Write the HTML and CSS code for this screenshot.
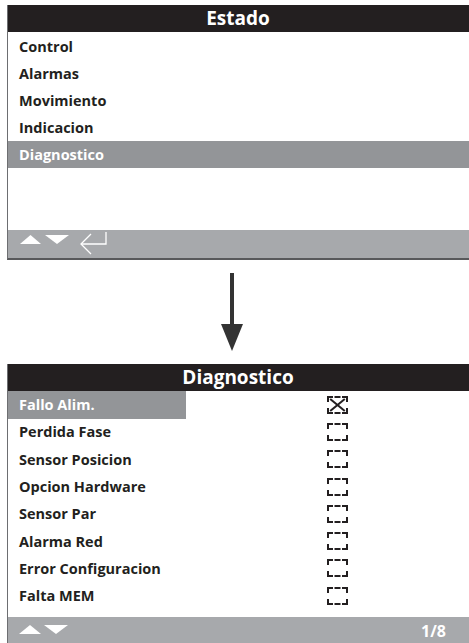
FILE: index.html
```html
<!DOCTYPE html>
<html lang="es">
<head>
  <meta charset="UTF-8">
  <title>Estado / Diagnostico</title>
  <link rel="stylesheet" href="styles.css">
</head>
<body>
  <div class="screen screen-menu">
    <div class="title">Estado</div>
    <div class="list">
      <div class="row">Control</div>
      <div class="row">Alarmas</div>
      <div class="row">Movimiento</div>
      <div class="row">Indicacion</div>
      <div class="row selected">Diagnostico</div>
    </div>
    <div class="footer">
      <svg class="nav" width="110" height="24" viewBox="0 0 110 24">
        <polygon points="12,12 22.5,3 33,12" fill="#fff"/>
        <polygon points="37,3 61,3 49,12" fill="#fff"/>
        <path d="M98 0 V12 H73" fill="none" stroke="#fff" stroke-width="1.3"/>
        <path d="M83 2 L73 12 L83 22" fill="none" stroke="#fff" stroke-width="1.3"/>
      </svg>
    </div>
  </div>

  <div class="flow-arrow">
    <svg width="24" height="80" viewBox="0 0 24 80">
      <rect x="10" y="0" width="4" height="56" fill="#333"/>
      <polygon points="1,51 23,51 12,78" fill="#333"/>
    </svg>
  </div>

  <div class="screen screen-list">
    <div class="title">Diagnostico</div>
    <div class="list">
      <div class="row"><span class="label selected">Fallo Alim.</span><span class="check checked"></span></div>
      <div class="row"><span class="label">Perdida Fase</span><span class="check"></span></div>
      <div class="row"><span class="label">Sensor Posicion</span><span class="check"></span></div>
      <div class="row"><span class="label">Opcion Hardware</span><span class="check"></span></div>
      <div class="row"><span class="label">Sensor Par</span><span class="check"></span></div>
      <div class="row"><span class="label">Alarma Red</span><span class="check"></span></div>
      <div class="row"><span class="label">Error Configuracion</span><span class="check"></span></div>
      <div class="row"><span class="label">Falta MEM</span><span class="check"></span></div>
    </div>
    <div class="footer">
      <svg class="nav" width="70" height="24" viewBox="0 0 70 24">
        <polygon points="11,15 22,6 33,15" fill="#fff"/>
        <polygon points="36,6 60,6 48,15" fill="#fff"/>
      </svg>
      <span class="page">1/8</span>
    </div>
  </div>
</body>
</html>
```

FILE: styles.css
```css
html, body {
  margin: 0;
  overflow: hidden;
}
body {
  font-family: "Open Sans", "Noto Sans", sans-serif;
  background-color: #fff;
  padding-top: 5px;
  width: 469px;
}
.screen {
  margin-left: 7px;
  width: 470px;
  border-left: 1px solid #6d6e71;
  border-bottom: 2px solid #58595b;
  display: flex;
  flex-direction: column;
}
.title {
  height: 27px;
  background-color: #231f20;
  color: #fff;
  font-weight: 700;
  font-size: 19px;
  line-height: 27px;
  text-align: center;
  padding-right: 10px;
}
.list {
  display: flex;
  flex-direction: column;
}
.row {
  height: 27px;
  line-height: 27px;
  font-size: 14.5px;
  font-weight: 700;
  color: #231f20;
  padding-left: 11px;
  display: flex;
  align-items: center;
}
.row.selected {
  background-color: #939598;
  color: #fff;
}
.screen-menu .list {
  height: 198px;
}
.screen-menu .row:first-child {
  height: 28px;
}
.footer {
  height: 28px;
  background-color: #a7a9ac;
  display: flex;
  align-items: center;
  justify-content: space-between;
}
.nav {
  display: block;
}
.flow-arrow {
  height: 104px;
  display: flex;
  justify-content: center;
  align-items: flex-start;
  padding-top: 13px;
  box-sizing: border-box;
  padding-right: 6px;
}
.screen-list {
  border-bottom: none;
}
.screen-list .list {
  padding-bottom: 8px;
}
.screen-list .row {
  padding-left: 0;
  height: 27.3px;
}
.screen-list .label {
  width: 167px;
  padding-left: 11px;
  height: 100%;
  display: flex;
  align-items: center;
}
.screen-list .label.selected {
  background-color: #939598;
  color: #fff;
  height: 28px;
}
.check {
  margin-left: 141px;
  width: 21px;
  height: 18px;
  box-sizing: border-box;
  border: 2px dashed #231f20;
  position: relative;
}
.check.checked::before,
.check.checked::after {
  content: "";
  position: absolute;
  left: 50%;
  top: 50%;
  width: 19px;
  height: 2px;
  margin-left: -9.5px;
  margin-top: -1px;
  background-color: #231f20;
  transform: rotate(40deg);
}
.check.checked::after {
  transform: rotate(-40deg);
}
.page {
  color: #fff;
  font-weight: 700;
  font-size: 16px;
  margin-right: 32px;
}
```
